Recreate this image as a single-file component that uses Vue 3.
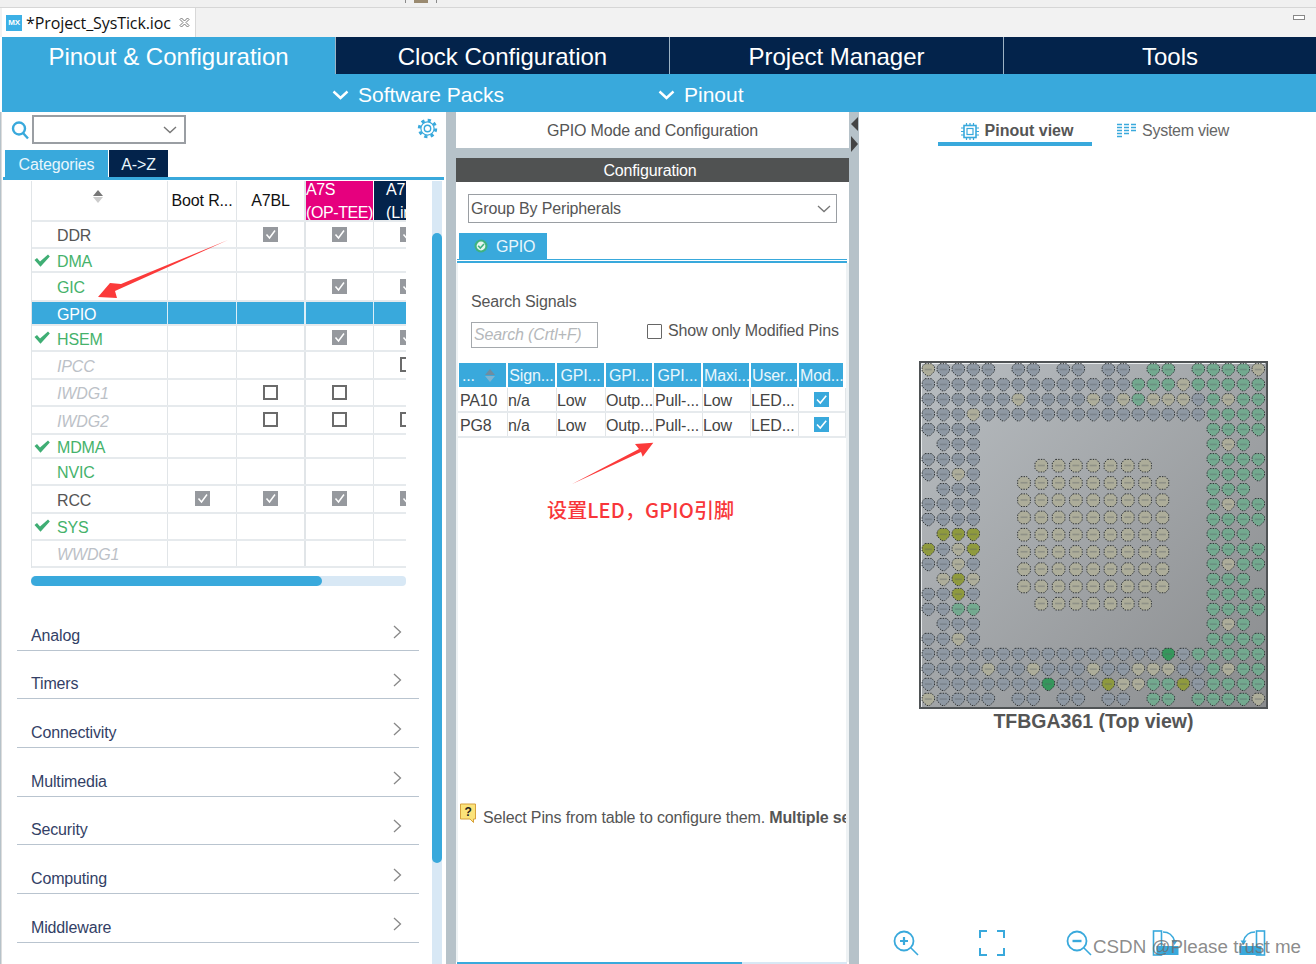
<template>
  <div class="app">
    <div class="toolbar">
      <i class="tool-sep first"></i>
      <i class="tool-bit"></i>
      <i class="tool-sep"></i>
    </div>

    <div class="editor-tabs">
      <div class="editor-tab">
        <span class="mx-icon">MX</span>
        <span class="editor-name">*Project_SysTick.ioc</span>
        <svg class="tab-close" width="11" height="11" viewBox="0 0 11 11">
          <path d="M1 2.5 2.5 1 5.5 4 8.5 1 10 2.5 7 5.5 10 8.5 8.5 10 5.5 7 2.5 10 1 8.5 4 5.5Z" fill="none" stroke="#777" />
        </svg>
      </div>
      <div class="maximize"></div>
    </div>

    <nav class="main-nav">
      <div class="nav-item active first">Pinout &amp; Configuration</div>
      <div class="nav-item">Clock Configuration</div>
      <div class="nav-item">Project Manager</div>
      <div class="nav-item tools">Tools</div>
    </nav>

    <div class="sub-nav">
      <div class="sub-item packs">
        <svg width="17" height="10" viewBox="0 0 17 10"><path d="M1.5 1.5 8.5 8 15.5 1.5" fill="none" stroke="#fff" stroke-width="2.4" /></svg>
        Software Packs
      </div>
      <div class="sub-item">
        <svg width="17" height="10" viewBox="0 0 17 10"><path d="M1.5 1.5 8.5 8 15.5 1.5" fill="none" stroke="#fff" stroke-width="2.4" /></svg>
        Pinout
      </div>
    </div>

    <main class="workspace">
      <!-- left: peripherals -->
      <section class="left-panel">
        <div class="left-content">
          <div class="search-row">
            <svg class="search-icon" width="18" height="20" viewBox="0 0 18 20">
              <circle cx="8" cy="8.5" r="6" fill="none" stroke="#39a9dc" stroke-width="2.4" />
              <path d="M12 13 17 18.5" stroke="#39a9dc" stroke-width="2.4" />
            </svg>
            <div class="combo">
              <svg width="14" height="8" viewBox="0 0 14 8"><path d="M1 1 7 6.5 13 1" fill="none" stroke="#777" stroke-width="1.4" /></svg>
            </div>
            <svg class="gear" width="21" height="21" viewBox="0 0 21 21">
              <circle cx="10.5" cy="10.5" r="8.2" fill="none" stroke="#39a9dc" stroke-width="3" stroke-dasharray="3.2 3.23" />
              <circle cx="10.5" cy="10.5" r="6.6" fill="#fff" stroke="#39a9dc" stroke-width="1.2" />
              <circle cx="10.5" cy="10.5" r="3.2" fill="none" stroke="#39a9dc" stroke-width="1.4" />
            </svg>
          </div>

          <div class="side-tabs">
            <div class="side-tab on">Categories</div>
            <div class="side-tab az">A-&gt;Z</div>
          </div>

          <div class="periph-table">
            <div class="periph-row head">
              <div class="cell name-cell">
                <span class="sorter"><i class="up"></i><i class="down"></i></span>
              </div>
              <div class="cell">Boot R...</div>
              <div class="cell">A7BL</div>
              <div class="cell ctx pink"><span class="ctx-text">A7S<br />(OP-TEE)</span></div>
              <div class="cell ctx navy"><span class="ctx-text">A7NS<br />(Linux)</span></div>
            </div>
            <div
              v-for="row in peripherals"
              :key="row.name"
              class="periph-row"
              :class="row.kind"
              :style="{ height: row.h + 'px' }"
            >
              <div class="cell name-cell">
                <svg v-if="row.done" class="done" width="16" height="13" viewBox="0 0 16 13">
                  <path d="M0.5 6 3 4 6 7.5 14 0.5 15.8 2.5 6.5 12.8Z" fill="#3fae74" />
                </svg>
                <span class="periph-name">{{ row.name }}</span>
              </div>
              <div v-for="(c, i) in row.cells" :key="i" class="cell">
                <span v-if="c === 'c'" class="tick">
                  <svg width="15" height="15" viewBox="0 0 15 15"><path d="M3.5 7.5 6.5 11 12 3.5" fill="none" stroke="#fff" stroke-width="1.5" /></svg>
                </span>
                <span v-else-if="c === 'u'" class="untick"></span>
              </div>
            </div>
          </div>

          <div class="h-scroll"><div class="h-thumb"></div></div>

          <ul class="categories">
            <li v-for="cat in categories" :key="cat">
              <span>{{ cat }}</span>
              <svg width="9" height="14" viewBox="0 0 9 14"><path d="M1 1 7.5 7 1 13" fill="none" stroke="#888" stroke-width="1.3" /></svg>
            </li>
          </ul>
        </div>
        <div class="v-scroll"><div class="v-thumb"></div></div>
      </section>

      <!-- middle: mode and configuration -->
      <section class="middle-panel">
        <div class="mode-title">GPIO Mode and Configuration</div>
        <div class="config">
          <div class="config-title">Configuration</div>
          <div class="group-select">
            <span class="group-text">Group By Peripherals</span>
            <svg width="14" height="8" viewBox="0 0 14 8"><path d="M1 1 7 6.5 13 1" fill="none" stroke="#777" stroke-width="1.3" /></svg>
          </div>
          <div class="gpio-tab">
            <svg width="14" height="14" viewBox="0 0 14 14">
              <circle cx="7" cy="7" r="6.5" fill="#3fb27f" />
              <circle cx="7" cy="7" r="4.4" fill="#e6f5ee" />
              <path d="M4.2 6.8 6.3 9 10 5" fill="none" stroke="#3fb27f" stroke-width="1.6" />
            </svg>
            <span class="gpio-label">GPIO</span>
          </div>
          <div class="tab-rule"></div>
          <div class="config-body">
            <div class="search-label">Search Signals</div>
            <div class="filter-row">
              <div class="signal-input">Search (Crtl+F)</div>
              <label class="modified"><span class="mod-box"></span>Show only Modified Pins</label>
            </div>

            <div class="pin-table">
              <div class="pin-head first-col">
                ...
                <span class="sorter small"><i class="up"></i><i class="down"></i></span>
              </div>
              <div v-for="h in pinHeads" :key="h.label" class="pin-head" :class="{ tight: h.tight }">{{ h.label }}</div>
              <template v-for="pin in pins" :key="pin[0]">
                <div v-for="(val, i) in pin" :key="i" class="pin-cell">{{ val }}</div>
                <div class="pin-cell mod"><span class="blue-tick">
                  <svg width="15" height="15" viewBox="0 0 15 15"><path d="M3 7.5 6.3 11 12.2 3.8" fill="none" stroke="#fff" stroke-width="1.6" /></svg>
                </span></div>
              </template>
            </div>

            <div class="help-line">
              <svg width="18" height="21" viewBox="0 0 18 21">
                <path d="M1.5 1H16.5V16H14.5V19.5L11 16H1.5Z" fill="#fbe37a" stroke="#d7a13c" />
                <text x="9" y="13" text-anchor="middle" font-size="12" font-weight="700" font-family="Liberation Sans, sans-serif" fill="#222">?</text>
              </svg>
              <span class="help-text">Select Pins from table to configure them. <b>Multiple selection is allowed</b></span>
            </div>
          </div>
          <div class="bottom-scroll"><div class="bottom-thumb"></div></div>
        </div>
      </section>

      <div class="sash">
        <i class="sash-left"></i>
        <i class="sash-right"></i>
      </div>

      <!-- right: chip view -->
      <section class="right-panel">
        <div class="view-tabs">
          <div class="view-tab on">
            <svg width="18" height="17" viewBox="0 0 18 17">
              <rect x="3" y="2.5" width="12" height="12" fill="none" stroke="#39a9dc" stroke-width="1.6" />
              <rect x="6" y="5.5" width="6" height="6" fill="none" stroke="#39a9dc" stroke-width="1.2" />
              <path d="M0 5H3M0 8.5H3M0 12H3M15 5H18M15 8.5H18M15 12H18M5.5 0V2.5M9 0V2.5M12.5 0V2.5M5.5 14.5V17M9 14.5V17M12.5 14.5V17" stroke="#39a9dc" stroke-width="1.2" />
            </svg>
            Pinout view
          </div>
          <div class="view-tab">
            <svg width="19" height="16" viewBox="0 0 19 16">
              <path d="M0 1.5H5M7 1.5H12M14 1.5H19M0 4.5H5M7 4.5H12M14 4.5H19M0 7.5H5M7 7.5H12M14 7.5H19M0 10.5H5M7 10.5H12M0 13.5H5" stroke="#39a9dc" stroke-width="1.7" />
            </svg>
            System view
          </div>
        </div>

        <div class="chip-wrap">
          <svg class="chip" width="349" height="348" viewBox="0 0 349 348">
            <defs>
              <linearGradient id="chipFill" x1="0" y1="0" x2="1" y2="1">
                <stop offset="0" stop-color="#b8bdc1" />
                <stop offset="1" stop-color="#8a8c8e" />
              </linearGradient>
            </defs>
            <rect x="1" y="1" width="347" height="346" fill="url(#chipFill)" stroke="#4f5355" stroke-width="2" />
            <path d="M2.5 346V2.5H346" fill="none" stroke="#e8ebed" stroke-width="1" />
            <g v-for="p in chipPins" :key="p.id" :transform="`translate(${p.x} ${p.y})`">
              <path :d="p.round ? roundPin : pointPin" :fill="p.fill" stroke="#2e3234" stroke-width="1" stroke-dasharray="1.4 1.2" />
              <rect x="-3.5" y="-1" width="7" height="1.6" fill="#5a5f63" opacity="0.35" />
            </g>
          </svg>
          <div class="chip-name">TFBGA361 (Top view)</div>
        </div>

        <div class="zoom-bar">
          <svg width="26" height="26" viewBox="0 0 26 26">
            <circle cx="11" cy="11" r="9.5" fill="none" stroke="#39a9dc" stroke-width="1.8" />
            <path d="M7 11H15M11 7V15" stroke="#39a9dc" stroke-width="2.2" />
            <path d="M18 18 25 25" stroke="#39a9dc" stroke-width="1.6" />
          </svg>
          <svg width="26" height="26" viewBox="0 0 26 26">
            <path d="M1 8V1H8M18 1H25V8M25 18V25H18M8 25H1V18" fill="none" stroke="#39a9dc" stroke-width="2" />
          </svg>
          <svg width="26" height="26" viewBox="0 0 26 26">
            <circle cx="11" cy="11" r="9.5" fill="none" stroke="#39a9dc" stroke-width="1.8" />
            <path d="M6.5 11H15.5" stroke="#39a9dc" stroke-width="2.4" />
            <path d="M18 18 25 25" stroke="#39a9dc" stroke-width="1.6" />
          </svg>
          <svg width="27" height="26" viewBox="0 0 27 26">
            <rect x="1.5" y="1" width="8" height="24" fill="none" stroke="#39a9dc" stroke-width="1.6" />
            <rect x="4.5" y="16" width="22" height="9" fill="#39a9dc" />
            <path d="M11 2C17 2 21 6 22.5 11" fill="none" stroke="#39a9dc" stroke-width="1.5" />
            <path d="M19.5 10.5H25.5L22.5 15Z" fill="#39a9dc" />
          </svg>
          <svg width="27" height="26" viewBox="0 0 27 26">
            <rect x="17.5" y="1" width="8" height="24" fill="none" stroke="#39a9dc" stroke-width="1.6" />
            <rect x="0.5" y="16" width="22" height="9" fill="#39a9dc" />
            <path d="M16 2C10 2 6 6 4.5 11" fill="none" stroke="#39a9dc" stroke-width="1.5" />
            <path d="M1.5 10.5H7.5L4.5 15Z" fill="#39a9dc" />
          </svg>
        </div>
      </section>
    </main>

    <!-- annotations drawn over the screenshot -->
    <svg class="marks" width="1316" height="964" viewBox="0 0 1316 964">
      <polygon points="228,240 121,284 110,283 98,297 117,298 115,291" fill="#fb3a3a" />
      <polygon points="571.7,484.3 639,449 635,444 653.3,442.7 642.7,456.7 641,452" fill="#fb3a3a" />
    </svg>
    <div class="note">设置LED，GPIO引脚</div>
    <div class="watermark">CSDN @Please trust me</div>
  </div>
</template>

<script setup>
const peripherals = [
  { name: 'DDR', h: 27, kind: '', cells: ['', 'c', 'c', 'c'] },
  { name: 'DMA', h: 24, kind: 'ok', done: true, cells: ['', '', '', ''] },
  { name: 'GIC', h: 29, kind: 'ok', cells: ['', '', 'c', 'c'] },
  { name: 'GPIO', h: 24, kind: 'selected', cells: ['', '', '', ''] },
  { name: 'HSEM', h: 26, kind: 'ok', done: true, cells: ['', '', 'c', 'c'] },
  { name: 'IPCC', h: 28, kind: 'off', cells: ['', '', '', 'u'] },
  { name: 'IWDG1', h: 27, kind: 'off', cells: ['', 'u', 'u', ''] },
  { name: 'IWDG2', h: 28, kind: 'off', cells: ['', 'u', 'u', 'u'] },
  { name: 'MDMA', h: 24, kind: 'ok', done: true, cells: ['', '', '', ''] },
  { name: 'NVIC', h: 27, kind: 'ok', cells: ['', '', '', ''] },
  { name: 'RCC', h: 28, kind: '', cells: ['c', 'c', 'c', 'c'] },
  { name: 'SYS', h: 27, kind: 'ok', done: true, cells: ['', '', '', ''] },
  { name: 'WWDG1', h: 27, kind: 'off', cells: ['', '', '', ''] }
]

const categories = ['Analog', 'Timers', 'Connectivity', 'Multimedia', 'Security', 'Computing', 'Middleware']

const pinHeads = [
  { label: 'Sign...' },
  { label: 'GPI...' },
  { label: 'GPI...' },
  { label: 'GPI...' },
  { label: 'Maxi...', tight: true },
  { label: 'User...', tight: true },
  { label: 'Mod...', tight: true }
]

const pins = [
  ['PA10', 'n/a', 'Low', 'Outp...', 'Pull-...', 'Low', 'LED...'],
  ['PG8', 'n/a', 'Low', 'Outp...', 'Pull-...', 'Low', 'LED...']
]

const pointPin = 'M-3.2-6H3.2L6.2-3V1.6L1.5 6.2H-1.5L-6.2 1.6V-3Z'
const roundPin = 'M-3-6.3H3L6.3-2.8V2.8L3 6.3H-3L-6.3 2.8V-2.8Z'

const fills = { g: '#8e98a3', t: '#adad9a', m: '#73a98f', y: '#8f9a3e', d: '#35975c' }

// one letter per ball, '.' where the package has none
const ballMap = [
  'tgggg.gg.gg.gg.mm.mmmmt',
  'ggggggggggggggmmmtmmmmm',
  'ggggggtggggtgtmtttgmtmm',
  'gggtgggggggggggggggmmmm',
  'gggg...............mmmm',
  '.ggg...............mtm.',
  'gggg...............mmmm',
  'ggtg...............mmmm',
  '.ggg...............mmm.',
  'gggg...............mtmm',
  'gggg...............mmmm',
  '.yyy...............mmm.',
  'ygty...............mmmm',
  'ggtg...............mtmm',
  '.tyt...............mmm.',
  'ggyg...............mmmm',
  'ggmm...............mmmm',
  '.ggg...............mtm.',
  'ggtg...............mmmm',
  'ggggggggggggggggdgmmmmm',
  'ggggtggtgggtggtttggmtmm',
  'ggggggggdgggyttmmygmmmm',
  'tgggg.gg.gg.gg.mm.mmmmt'
]

const chipPins = []
ballMap.forEach((line, r) => {
  line.split('').forEach((code, c) => {
    if (code === '.') return
    chipPins.push({
      id: `o${r}-${c}`,
      x: 9.3 + c * 15,
      y: 8.7 + r * 14.98,
      fill: fills[code],
      round: false
    })
  })
})

// inner block of nine by nine, first and last rows are short
for (let r = 0; r < 9; r++) {
  for (let c = 0; c < 9; c++) {
    if ((r === 0 || r === 8) && (c === 0 || c === 8)) continue
    chipPins.push({
      id: `i${r}-${c}`,
      x: 105 + c * 17.3,
      y: 104.7 + r * 17.25,
      fill: fills.t,
      round: true
    })
  }
}
</script>

<style>
html,
body {
  margin: 0;
  background: #fff;
}
</style>

<style scoped>
.app {
  position: relative;
  width: 1316px;
  height: 964px;
  overflow: hidden;
  display: flex;
  flex-direction: column;
  background: #fff;
  font-family: "Liberation Sans", Arial, sans-serif;
  font-size: 16px;
  letter-spacing: -0.15px;
  color: #555;
}

.toolbar {
  height: 7px;
  background: #f0f0f0;
  border-bottom: 1px solid #d6d6d6;
  display: flex;
  align-items: flex-start;
}

.tool-sep {
  width: 1px;
  height: 3px;
  background: #8a8a8a;
}

.tool-sep.first {
  margin-left: 405px;
}

.tool-bit {
  width: 14px;
  height: 3px;
  margin: 0 8px;
  background: #9a8a70;
}

.editor-tabs {
  height: 29px;
  display: flex;
  justify-content: space-between;
  background: #f2f2f2;
  padding-left: 2px;
  padding-right: 11px;
}

.editor-tab {
  width: 194px;
  background: #fff;
  border-right: 1px solid #d8d8d8;
  box-sizing: border-box;
  display: flex;
  align-items: center;
  padding-left: 4px;
}

.mx-icon {
  width: 16px;
  height: 16px;
  background: #3cb0e6;
  color: #fff;
  font-size: 8px;
  font-weight: 700;
  line-height: 16px;
  text-align: center;
  flex-shrink: 0;
}

.editor-name {
  font-family: "Open Sans", sans-serif;
  font-size: 16px;
  letter-spacing: -0.1px;
  color: #111;
  margin-left: 4px;
  white-space: nowrap;
}

.tab-close {
  margin-left: 8px;
  flex-shrink: 0;
}

.maximize {
  width: 10px;
  height: 3px;
  margin-top: 7px;
  border: 1px solid #888;
  background: #fff;
}

.main-nav {
  height: 37px;
  display: flex;
  padding-left: 2px;
  background: #fff;
}

.nav-item {
  width: 334px;
  box-sizing: border-box;
  background: #03234b;
  border-left: 1px solid #9db3c4;
  color: #fff;
  font-size: 24px;
  letter-spacing: 0;
  line-height: 40px;
  text-align: center;
}

.nav-item.first {
  width: 333px;
  border-left: 0;
}

.nav-item.active {
  background: #39a9dc;
}

.nav-item.tools {
  flex: 1;
  padding-left: 20px;
}

.sub-nav {
  height: 38px;
  margin-left: 2px;
  background: #39a9dc;
  display: flex;
  padding-left: 330px;
}

.sub-item {
  display: flex;
  align-items: center;
  gap: 9px;
  color: #fff;
  font-size: 21px;
  letter-spacing: 0;
  padding-top: 3px;
}

.sub-item.packs {
  width: 326px;
}

.workspace {
  flex: 1;
  min-height: 0;
  display: flex;
  background: #b6c2c9;
}

.left-panel {
  width: 444px;
  margin-left: 2px;
  border-left: 0;
  display: flex;
  background: #fff;
  box-shadow: -1px 0 0 #ddd;
}

.left-content {
  width: 430px;
  flex-shrink: 0;
}

.search-row {
  height: 29px;
  margin-top: 3px;
  display: flex;
  align-items: center;
  padding-left: 9px;
}

.search-icon {
  margin-right: 3px;
  flex-shrink: 0;
}

.combo {
  width: 154px;
  height: 29px;
  box-sizing: border-box;
  border: 2px solid #9a9ea3;
  display: flex;
  align-items: center;
  justify-content: flex-end;
  padding-right: 7px;
  flex-shrink: 0;
}

.gear {
  margin-left: 231px;
  margin-top: -3px;
  flex-shrink: 0;
}

.side-tabs {
  margin-top: 6px;
  margin-left: 1px;
  padding-left: 2px;
  display: flex;
  height: 27px;
  border-bottom: 3px solid #39a9dc;
  width: 439px;
  box-sizing: content-box;
}

.side-tab {
  width: 103px;
  background: #39a9dc;
  color: #e8f6fc;
  text-align: center;
  line-height: 29px;
  margin-right: 1px;
}

.side-tab.az {
  width: 59px;
  background: #03234b;
}

.periph-table {
  width: 375px;
  margin-left: 29px;
  margin-top: 1px;
  overflow: hidden;
  border-left: 1px solid #e1e5e8;
  box-sizing: border-box;
}

.periph-row {
  display: grid;
  grid-template-columns: 136px 69px 69px 68px 68px;
  width: 410px;
  box-sizing: border-box;
  border-bottom: 2px solid #e6eaed;
  align-items: stretch;
}

.periph-row.head {
  height: 41px;
  color: #111;
}

.cell {
  box-sizing: border-box;
  border-right: 1px solid #e1e5e8;
  display: flex;
  align-items: center;
  justify-content: center;
}

.cell:nth-child(3) {
  border-right-width: 2px;
}

.name-cell {
  position: relative;
  justify-content: flex-start;
  padding-left: 25px;
}

.head .name-cell {
  justify-content: center;
  padding-left: 0;
  padding-right: 4px;
}

.ctx {
  display: block;
  color: #fff;
  font-size: 16px;
  line-height: 23px;
  border-right: 0;
  white-space: nowrap;
  overflow: hidden;
  height: 39px;
}

.ctx-text {
  display: block;
  margin-top: -3px;
}

.pink {
  background: #e6007e;
  margin-right: 1px;
  letter-spacing: -0.4px;
}

.navy {
  background: #03234b;
  padding-left: 12px;
}

.sorter {
  display: inline-flex;
  flex-direction: column;
  gap: 1px;
  margin-top: -9px;
}

.sorter i {
  width: 0;
  height: 0;
  border-left: 5px solid transparent;
  border-right: 5px solid transparent;
}

.sorter .up {
  border-bottom: 6px solid #777;
}

.sorter .down {
  border-top: 6px solid #ccc;
}

.sorter.small {
  margin: 0 0 0 10px;
}

.sorter.small .up {
  border-bottom-color: #6f8da0;
}

.sorter.small .down {
  border-top-color: #7fb4d0;
}

.periph-name {
  color: #555;
  padding-top: 3px;
}

.done {
  position: absolute;
  left: 2px;
  top: 5px;
}

.ok .periph-name {
  color: #45b26b;
}

.off .periph-name {
  color: #bcc1c7;
  font-style: italic;
}

.selected {
  background: #39a9dc;
}

.selected .periph-name {
  color: #fff;
}

.selected .cell {
  border-right-color: #dceef7;
}

.tick {
  width: 15px;
  height: 15px;
  background: #96999e;
  display: block;
  margin-bottom: 1px;
}

.tick svg,
.blue-tick svg {
  display: block;
}

.untick {
  width: 15px;
  height: 15px;
  box-sizing: border-box;
  border: 2px solid #6b6b6b;
  background: #fff;
  display: block;
  margin-bottom: 1px;
}

.h-scroll {
  width: 375px;
  height: 10px;
  margin: 8px 0 0 29px;
  background: #d8e8f5;
  border-radius: 4px;
}

.h-thumb {
  width: 291px;
  height: 10px;
  background: #39a9dc;
  border-radius: 5px;
}

.categories {
  list-style: none;
  margin: 16px 0 0 15px;
  padding: 0;
  width: 402px;
}

.categories li {
  height: 48.7px;
  box-sizing: border-box;
  border-bottom: 1.5px solid #b9c4cf;
  display: flex;
  align-items: flex-end;
  justify-content: space-between;
  padding: 0 17px 5px 14px;
  color: #333f66;
}

.categories svg {
  margin-bottom: 6px;
}

.v-scroll {
  width: 10px;
  margin-top: 69px;
  background: #d8e8f5;
  flex-shrink: 0;
}

.v-thumb {
  margin-top: 52px;
  height: 630px;
  background: #39a9dc;
  border-radius: 5px;
}

.middle-panel {
  width: 393px;
  margin-left: 10px;
  display: flex;
  flex-direction: column;
}

.mode-title {
  height: 36px;
  line-height: 37px;
  text-align: center;
  background: #fff;
}

.config {
  margin-top: 10px;
  flex: 1;
  background: #fff;
  display: flex;
  flex-direction: column;
  min-height: 0;
}

.config-title {
  height: 24px;
  line-height: 25px;
  background: #505252;
  color: #fff;
  text-align: center;
  padding-right: 5px;
}

.group-select {
  width: 369px;
  height: 29px;
  box-sizing: border-box;
  margin: 12px 0 0 12px;
  border: 1.5px solid #9a9ea3;
  padding: 0 5px 0 2px;
  display: flex;
  align-items: center;
  justify-content: space-between;
}

.group-text {
  padding-top: 1px;
}

.gpio-tab {
  width: 88px;
  height: 26px;
  margin: 10px 0 0 3px;
  background: #39a9dc;
  color: #e8f6fc;
  display: flex;
  align-items: center;
  gap: 8px;
  padding-left: 15px;
  box-sizing: border-box;
}

.gpio-label {
  padding-top: 1px;
}

.tab-rule {
  height: 4px;
  box-sizing: border-box;
  margin: 0 2px 0 1px;
  background: #fff;
  border-top: 1px solid #39a9dc;
  border-bottom: 2px solid #39a9dc;
}

.config-body {
  flex: 1;
  min-height: 0;
  border-left: 2px solid #eef2f4;
  border-right: 3px solid #eef2f4;
  padding-left: 1px;
  display: flex;
  flex-direction: column;
  overflow: hidden;
}

.search-label {
  margin: 29px 0 0 12px;
  line-height: 20px;
}

.filter-row {
  display: flex;
  align-items: flex-start;
  margin: 10px 0 0 12px;
}

.signal-input {
  width: 127px;
  height: 26px;
  box-sizing: border-box;
  border: 1.5px solid #a5a9ad;
  color: #b5b8bb;
  font-style: italic;
  line-height: 24px;
  padding-left: 2px;
  white-space: nowrap;
  overflow: hidden;
  flex-shrink: 0;
}

.modified {
  display: flex;
  align-items: center;
  margin-left: 49px;
  gap: 6px;
  white-space: nowrap;
}

.mod-box {
  width: 15px;
  height: 15px;
  box-sizing: border-box;
  border: 1.5px solid #666;
  border-radius: 1px;
  flex-shrink: 0;
}

.pin-table {
  display: grid;
  grid-template-columns: 49px 49px 49px 48px 49px 48px 48px 46px;
  grid-auto-rows: 25px;
  margin-top: 15px;
  width: 386px;
  flex-shrink: 0;
}

.pin-head {
  background: #39a9dc;
  color: #e9f7fd;
  margin-right: 2px;
  height: 24px;
  line-height: 25px;
  text-align: center;
  white-space: nowrap;
  overflow: hidden;
}

.pin-head.tight {
  text-align: left;
  padding-left: 1px;
}

.first-col {
  text-align: left;
  padding-left: 3px;
  display: flex;
  align-items: center;
}

.pin-cell {
  border-right: 1px solid #e1e5e8;
  border-bottom: 2px solid #e6eaed;
  box-sizing: border-box;
  line-height: 25px;
  padding-left: 1px;
  margin-left: -1px;
  color: #444;
  white-space: nowrap;
  overflow: hidden;
}

.pin-cell:nth-child(8n + 1),
.pin-cell:nth-child(8n + 5) {
  padding-left: 2px;
}

.mod {
  display: flex;
  align-items: center;
  justify-content: center;
  margin-right: -1px;
  padding-right: 2px;
}

.blue-tick {
  width: 15px;
  height: 15px;
  background: #39a9dc;
  display: block;
}

.help-line {
  display: flex;
  align-items: flex-start;
  margin-top: 365px;
  gap: 6px;
}

.help-line svg {
  flex-shrink: 0;
}

.help-text {
  white-space: nowrap;
  line-height: 20px;
  margin-top: 5px;
}

.bottom-scroll {
  height: 2px;
  margin-left: 1px;
  margin-right: 2px;
  background: #d8e8f5;
}

.bottom-thumb {
  width: 285px;
  height: 2px;
  background: #39a9dc;
}

.sash {
  width: 10px;
  display: flex;
  flex-direction: column;
  gap: 5px;
  padding: 5px 0 0 2px;
  box-sizing: border-box;
}

.sash-left {
  width: 0;
  height: 0;
  border-top: 7px solid transparent;
  border-bottom: 7px solid transparent;
  border-right: 7px solid #444;
}

.sash-right {
  width: 0;
  height: 0;
  border-top: 8px solid transparent;
  border-bottom: 8px solid transparent;
  border-left: 7px solid #444;
}

.right-panel {
  flex: 1;
  background: #fff;
  display: flex;
  flex-direction: column;
}

.view-tabs {
  height: 34px;
  display: flex;
  padding-left: 79px;
}

.view-tab {
  width: 154px;
  box-sizing: border-box;
  display: flex;
  align-items: center;
  justify-content: center;
  gap: 6px;
  color: #666;
  padding-top: 4px;
  letter-spacing: -0.25px;
}

.view-tab.on {
  font-weight: 700;
  color: #555;
  border-bottom: 4px solid #39a9dc;
  padding: 8px 0 0 4px;
  margin-right: 4px;
  letter-spacing: 0;
}

.view-tab svg {
  flex-shrink: 0;
}

.chip-wrap {
  margin-top: 215px;
  margin-left: 60px;
  width: 349px;
  display: flex;
  flex-direction: column;
  align-items: center;
}

.chip {
  display: block;
}

.chip-name {
  font-size: 19.5px;
  font-weight: 700;
  letter-spacing: 0;
  line-height: 24px;
  color: #555;
  white-space: nowrap;
}

.zoom-bar {
  display: flex;
  gap: 60.25px;
  margin: 197px 0 0 34px;
}

.marks {
  position: absolute;
  left: 0;
  top: 0;
  pointer-events: none;
}

.note {
  position: absolute;
  left: 547px;
  top: 496px;
  font-family: "Noto Sans CJK SC", "Liberation Sans", sans-serif;
  font-size: 20px;
  font-weight: 500;
  letter-spacing: 0.15px;
  line-height: 28px;
  color: #f8363a;
  white-space: nowrap;
}

.watermark {
  position: absolute;
  left: 1093px;
  top: 935px;
  font-size: 18.8px;
  letter-spacing: 0;
  line-height: 24px;
  color: rgba(110, 110, 110, 0.8);
  white-space: nowrap;
}
</style>
